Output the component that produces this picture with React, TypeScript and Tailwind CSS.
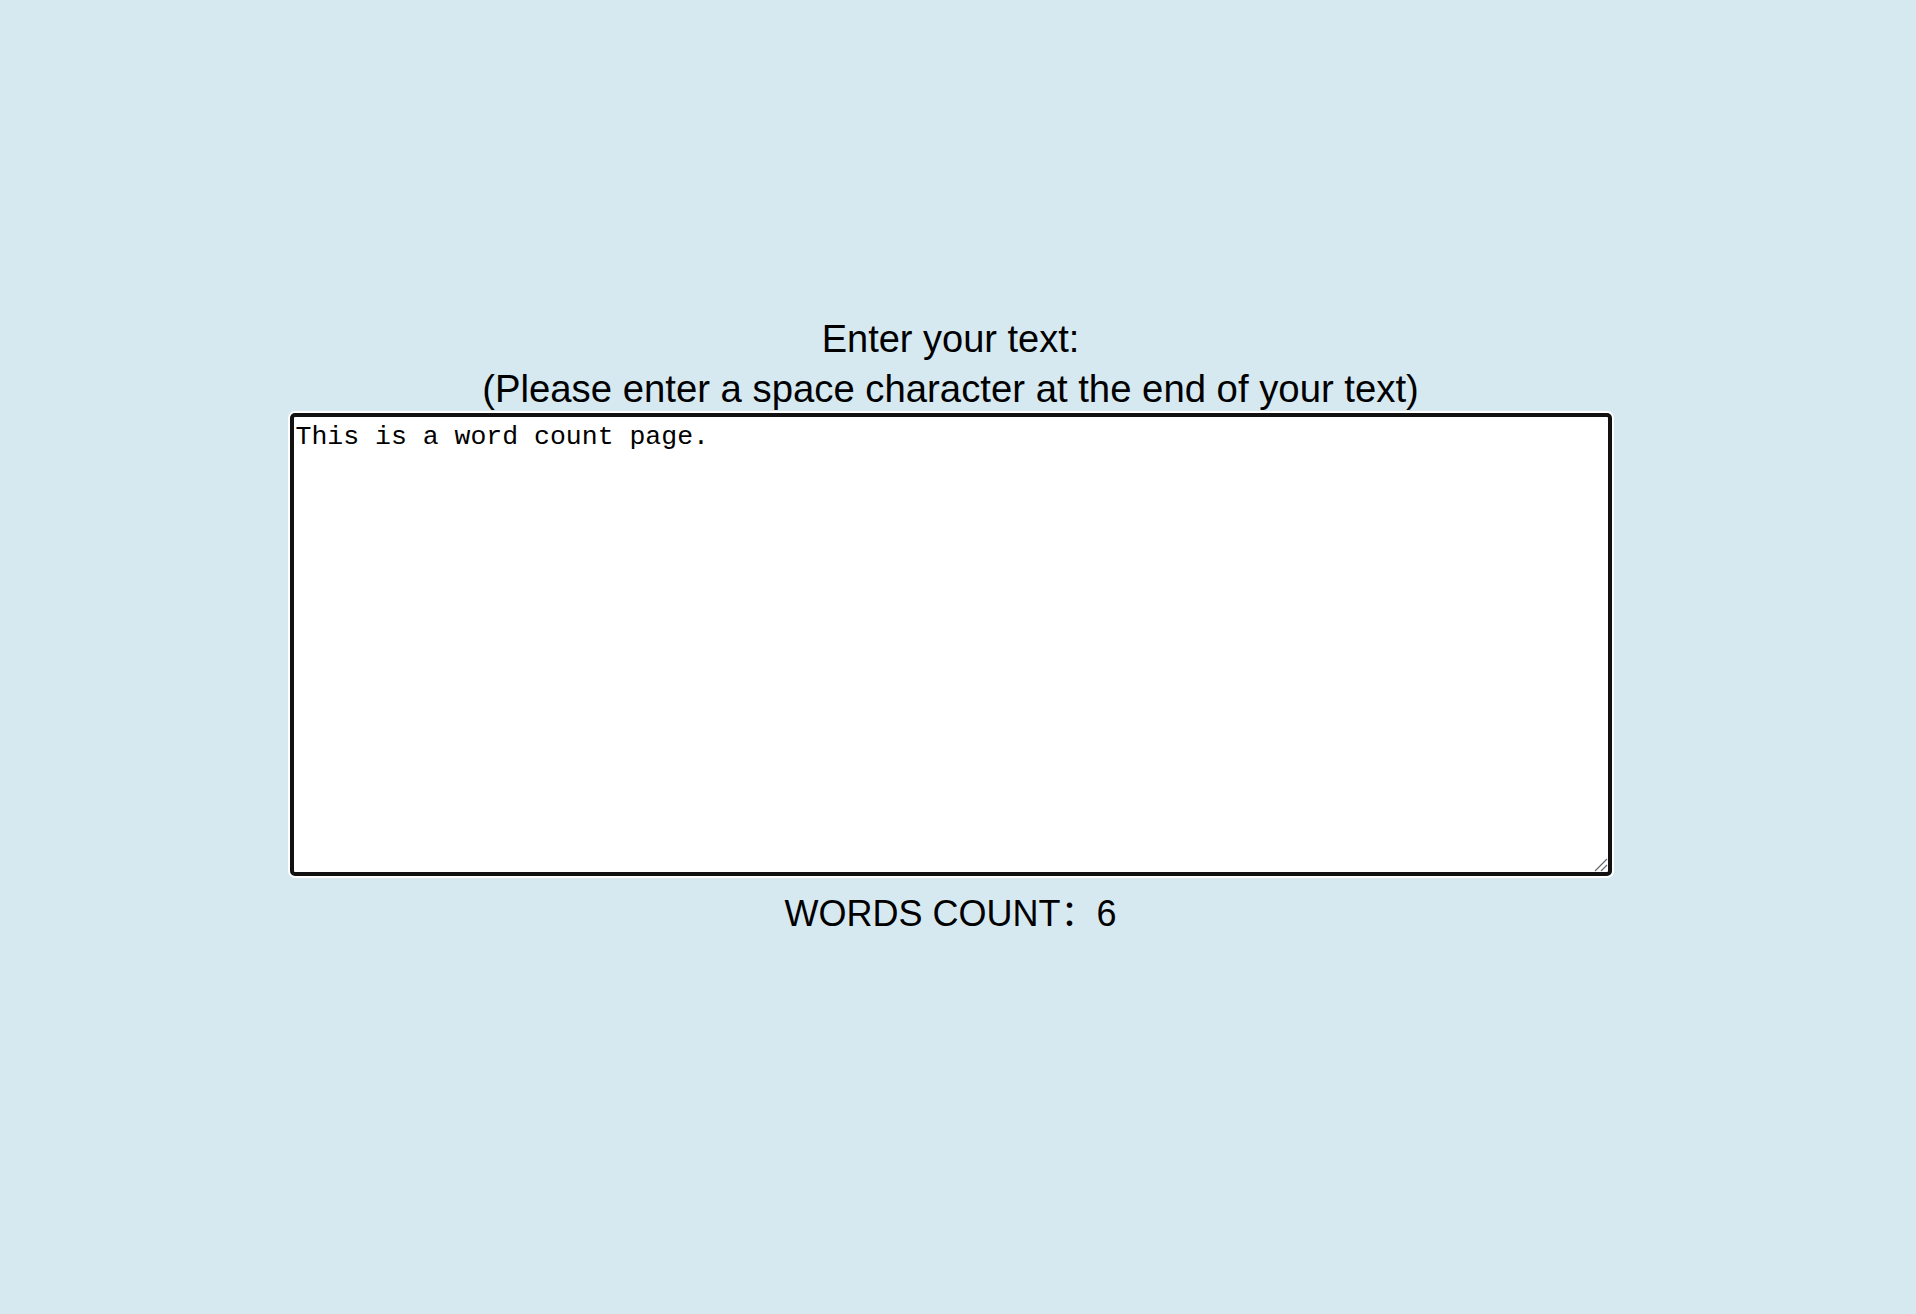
import React, { useState } from "react"

export default function App() {
    const [text, setText] = useState("This is a word count page.")

    const count = text.trim().length ? text.trim().split(/\s+/).length : 0

    return (
        <div className="min-h-screen w-full bg-[#d6e9f0] pr-[15px] pt-[315px] font-['Liberation_Sans','Noto_Sans_CJK_SC',sans-serif] text-black">
            <div className="flex flex-col items-center">
                <p className="text-[38px] leading-[49px]">Enter your text:</p>
                <p className="text-[38.3px] leading-[49px]">(Please enter a space character at the end of your text)</p>
                <div className="relative">
                    <textarea
                        value={text}
                        onChange={(e) => setText(e.target.value)}
                        spellCheck={false}
                        className="block w-[1322px] h-[463px] resize-none rounded-[5px] border-[4px] border-[#111] bg-white px-[2px] pt-[1px] font-['Liberation_Mono',monospace] text-[26.5px] text-black outline-none ring-2 ring-white"
                    />
                    {/* resize grip */}
                    <svg className="pointer-events-none absolute right-[4px] bottom-[4px] w-[14px] h-[14px]" viewBox="0 0 14 14">
                        <line x1="1" y1="13" x2="13" y2="1" stroke="#6b6b6b" strokeWidth="1.3" />
                        <line x1="7" y1="13" x2="13" y2="7" stroke="#6b6b6b" strokeWidth="1.3" />
                    </svg>
                </div>
                <p className="mt-[14px] text-[36px] leading-[48px]">WORDS COUNT：{count}</p>
            </div>
        </div>
    )
}
